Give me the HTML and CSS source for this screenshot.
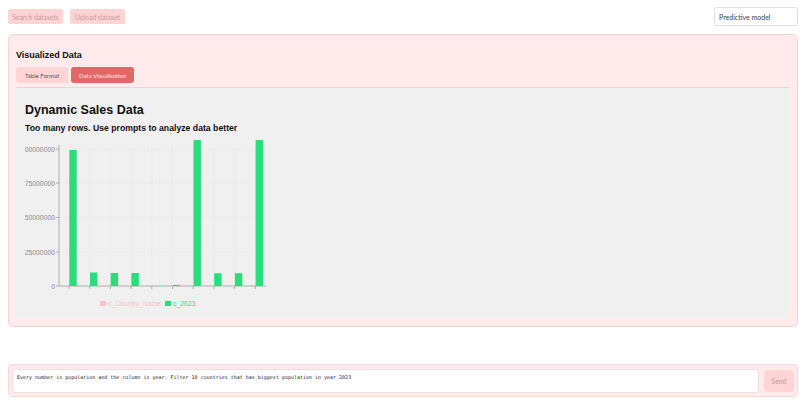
FILE: index.html
```html
<!DOCTYPE html>
<html lang="en">
<head>
    <meta charset="UTF-8">
    <meta name="viewport" content="width=device-width, initial-scale=1.0">
    <title>Visualized Data</title>
    <link rel="stylesheet" href="styles.css">
</head>
<body>

<div class="topbar">
    <div class="acciones">
        <button class="btn-suave">Search datasets</button>
        <button class="btn-suave">Upload dataset</button>
    </div>
    <input class="modelo" type="text" value="Predictive model">
</div>

<div class="panel">
    <h3 class="panel-titulo">Visualized Data</h3>
    <div class="tabs">
        <button class="tab">Table Format</button>
        <button class="tab activa">Data Visualisation</button>
    </div>

    <div class="grafico-caja">
        <h2>Dynamic Sales Data</h2>
        <h4>Too many rows. Use prompts to analyze data better</h4>

        <svg class="grafico" width="260" height="152" viewBox="25 140 260 152">
            <!-- grilla -->
            <g stroke="#e2e2e2" stroke-dasharray="2 2" stroke-width="0.5">
                <line x1="59" y1="150" x2="266" y2="150"/>
                <line x1="59" y1="184" x2="266" y2="184"/>
                <line x1="59" y1="218.5" x2="266" y2="218.5"/>
                <line x1="59" y1="253" x2="266" y2="253"/>
                <line x1="89.7" y1="150" x2="89.7" y2="287"/>
                <line x1="110.4" y1="150" x2="110.4" y2="287"/>
                <line x1="131.1" y1="150" x2="131.1" y2="287"/>
                <line x1="151.8" y1="150" x2="151.8" y2="287"/>
                <line x1="172.5" y1="150" x2="172.5" y2="287"/>
                <line x1="193.2" y1="150" x2="193.2" y2="287"/>
                <line x1="213.9" y1="150" x2="213.9" y2="287"/>
                <line x1="234.6" y1="150" x2="234.6" y2="287"/>
                <line x1="255.3" y1="150" x2="255.3" y2="287"/>
            </g>
            <!-- ejes -->
            <g stroke="#a0a0a0" stroke-width="0.8">
                <line x1="59" y1="146" x2="59" y2="287"/>
                <line x1="59" y1="287" x2="266" y2="287"/>
                <line x1="56" y1="150" x2="59" y2="150"/>
                <line x1="56" y1="184" x2="59" y2="184"/>
                <line x1="56" y1="218.5" x2="59" y2="218.5"/>
                <line x1="56" y1="253" x2="59" y2="253"/>
                <line x1="56" y1="287" x2="59" y2="287"/>
                <line x1="69" y1="287" x2="69" y2="290"/>
                <line x1="89.7" y1="287" x2="89.7" y2="290"/>
                <line x1="110.4" y1="287" x2="110.4" y2="290"/>
                <line x1="131.1" y1="287" x2="131.1" y2="290"/>
                <line x1="151.8" y1="287" x2="151.8" y2="290"/>
                <line x1="172.5" y1="287" x2="172.5" y2="290"/>
                <line x1="193.2" y1="287" x2="193.2" y2="290"/>
                <line x1="213.9" y1="287" x2="213.9" y2="290"/>
                <line x1="234.6" y1="287" x2="234.6" y2="290"/>
                <line x1="255.3" y1="287" x2="255.3" y2="290"/>
            </g>
            <g class="eje-texto" text-anchor="end">
                <text x="55" y="152.5">100000000</text>
                <text x="55" y="186.5">75000000</text>
                <text x="55" y="221">50000000</text>
                <text x="55" y="255.5">25000000</text>
                <text x="55" y="289.5">0</text>
            </g>
            <!-- barras c_2023 -->
            <g fill="#2add79">
                <rect x="69.3" y="151" width="7.4" height="136"/>
                <rect x="90" y="273.5" width="7.4" height="13.5"/>
                <rect x="110.7" y="274" width="7.4" height="13"/>
                <rect x="131.4" y="274" width="7.4" height="13"/>
                <rect x="172.8" y="285.8" width="7.4" height="1.2"/>
                <rect x="193.5" y="141" width="7.4" height="146"/>
                <rect x="214.2" y="274.2" width="7.4" height="12.8"/>
                <rect x="234.9" y="274.2" width="7.4" height="12.8"/>
                <rect x="255.6" y="141" width="7.4" height="146"/>
            </g>
        </svg>

        <div class="leyenda">
            <span class="item rosa"><i></i>c_Country_Name</span>
            <span class="item verde"><i></i>c_2023</span>
        </div>
    </div>
</div>

<div class="prompt">
    <input class="prompt-texto" type="text" value="Every number is population and the column is year. Filter 10 countries that has biggest population in year 2023">
    <button class="btn-suave enviar">Send</button>
</div>

</body>
</html>
```

FILE: styles.css
```css
body {
    font-family: Lato, "Liberation Sans", sans-serif;
    background-color: #fff;
    margin: 0;
    padding: 0;
}

button {
    font-family: Lato, sans-serif;
    cursor: pointer;
}

.topbar {
    display: flex;
    justify-content: space-between;
    align-items: flex-start;
    padding: 7px 8px 0 8px;
    height: 27px;
}

.acciones {
    display: flex;
    gap: 7px;
    padding-top: 2px;
}

.btn-suave {
    background-color: #ffd4d4;
    color: #c79a9a;
    border: none;
    border-radius: 2px;
    font-size: 6.8px;
    width: 55px;
    height: 15px;
    padding: 0;
}

.modelo {
    box-sizing: border-box;
    width: 84px;
    height: 19px;
    border: 1px solid #e2e2e2;
    border-radius: 2px;
    font-family: Lato, sans-serif;
    font-size: 7px;
    color: #444;
    padding: 0 4px;
    margin: 0;
}

/* panel principal */
.panel {
    box-sizing: border-box;
    margin: 0 8px;
    height: 293px;
    background-color: #ffebeb;
    border: 1px solid #f6d3d3;
    border-radius: 5px;
    padding: 14px 7px 7px 7px;
}

.panel-titulo {
    font-family: "Liberation Sans", Arial, sans-serif;
    font-size: 9px;
    font-weight: bold;
    color: #111;
    margin: 0 0 6px 0;
    line-height: 12px;
}

.tabs {
    display: flex;
    gap: 3px;
    padding-bottom: 4px;
    border-bottom: 1px solid #ecd4d4;
}

.tab {
    background-color: #ffd4d4;
    color: #555;
    border: none;
    border-radius: 3px;
    font-size: 6px;
    height: 16px;
    padding: 0 9px;
}

.tab.activa {
    background-color: #e46767;
    color: #ffe5e5;
    padding: 0 8px;
}

.grafico-caja {
    background-color: #f0f0f0;
    height: 230px;
    padding: 0 9px;
    box-sizing: border-box;
    overflow: hidden;
}

.grafico-caja h2 {
    font-family: "Liberation Sans", Arial, sans-serif;
    font-size: 12.5px;
    font-weight: bold;
    color: #111;
    margin: 0;
    padding-top: 14px;
    line-height: 16px;
}

.grafico-caja h4 {
    font-family: "Liberation Sans", Arial, sans-serif;
    font-size: 8.7px;
    font-weight: bold;
    color: #111;
    margin: 4px 0 0 0;
    line-height: 12px;
}

.grafico {
    display: block;
    margin-top: 5px;
}

.eje-texto text {
    font-family: "Liberation Sans", Arial, sans-serif;
    font-size: 6.8px;
    fill: #8a8a8a;
}

.leyenda {
    display: flex;
    gap: 4px;
    margin: 9px 0 0 75px;
    font-family: "Liberation Sans", Arial, sans-serif;
    font-size: 6.8px;
}

.leyenda .item {
    display: flex;
    align-items: center;
    gap: 2px;
}

.leyenda i {
    display: inline-block;
    width: 6px;
    height: 5px;
}

.rosa { color: #f6c3c3; }
.rosa i { background-color: #f6c3c3; }
.verde { color: #2add79; }
.verde i { background-color: #2add79; }

/* caja de prompt */
.prompt {
    box-sizing: border-box;
    margin: 37px 8px 0 8px;
    height: 33px;
    background-color: #ffebeb;
    border: 1px solid #f8d8d8;
    border-radius: 4px;
    display: flex;
    align-items: center;
    gap: 5px;
    padding: 0 3px;
}

.prompt-texto {
    box-sizing: border-box;
    flex-grow: 1;
    height: 24px;
    background: #fff;
    border: 1px solid #f2dcdc;
    border-radius: 3px;
    font-family: "DejaVu Sans Mono", monospace;
    font-size: 5px;
    color: #222;
    padding: 0 4px 8px 4px;
    margin: 0;
}

.enviar {
    width: 30px;
    height: 22px;
    border-radius: 4px;
}
```
